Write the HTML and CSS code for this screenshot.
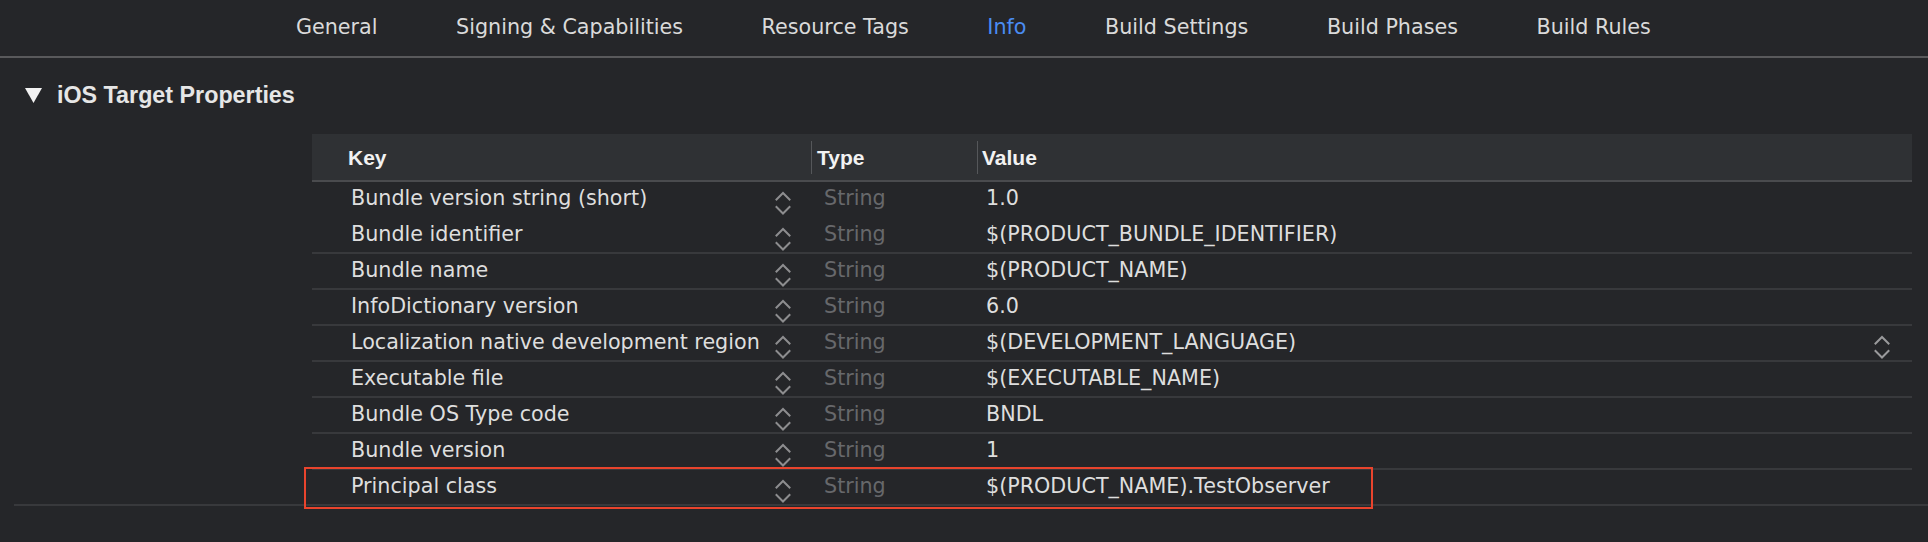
FILE: index.html
```html
<!DOCTYPE html>
<html lang="en">
<head>
<meta charset="utf-8">
<title>Info</title>
<link rel="stylesheet" href="styles.css">
</head>
<body>
<div class="page">
  <nav class="tabbar">
    <span class="tab">General</span>
    <span class="tab">Signing &amp; Capabilities</span>
    <span class="tab">Resource Tags</span>
    <span class="tab active">Info</span>
    <span class="tab">Build Settings</span>
    <span class="tab">Build Phases</span>
    <span class="tab">Build Rules</span>
  </nav>

  <section class="section">
    <div class="section-title">
      <svg class="disclosure" width="17" height="15" viewBox="0 0 17 15"><path d="M0 0 H17 L8.5 15 Z" fill="#f2f2f2"/></svg>
      <span>iOS Target Properties</span>
    </div>

    <div class="table">
      <div class="thead">
        <div class="th th-key">Key</div>
        <div class="th th-type">Type</div>
        <div class="th th-value">Value</div>
      </div>

      <div class="row first">
        <div class="cell key"><span>Bundle version string (short)</span><svg class="stepper" width="16" height="32" viewBox="0 0 16 32"><path d="M1.5 17.5 L8 11 L14.5 17.5 M1.5 25 L8 31.5 L14.5 25"/></svg></div>
        <div class="cell type">String</div>
        <div class="cell value"><span>1.0</span></div>
      </div>
      <div class="row">
        <div class="cell key"><span>Bundle identifier</span><svg class="stepper" width="16" height="32" viewBox="0 0 16 32"><path d="M1.5 17.5 L8 11 L14.5 17.5 M1.5 25 L8 31.5 L14.5 25"/></svg></div>
        <div class="cell type">String</div>
        <div class="cell value"><span>$(PRODUCT_BUNDLE_IDENTIFIER)</span></div>
      </div>
      <div class="row">
        <div class="cell key"><span>Bundle name</span><svg class="stepper" width="16" height="32" viewBox="0 0 16 32"><path d="M1.5 17.5 L8 11 L14.5 17.5 M1.5 25 L8 31.5 L14.5 25"/></svg></div>
        <div class="cell type">String</div>
        <div class="cell value"><span>$(PRODUCT_NAME)</span></div>
      </div>
      <div class="row">
        <div class="cell key"><span>InfoDictionary version</span><svg class="stepper" width="16" height="32" viewBox="0 0 16 32"><path d="M1.5 17.5 L8 11 L14.5 17.5 M1.5 25 L8 31.5 L14.5 25"/></svg></div>
        <div class="cell type">String</div>
        <div class="cell value"><span>6.0</span></div>
      </div>
      <div class="row">
        <div class="cell key"><span>Localization native development region</span><svg class="stepper" width="16" height="32" viewBox="0 0 16 32"><path d="M1.5 17.5 L8 11 L14.5 17.5 M1.5 25 L8 31.5 L14.5 25"/></svg></div>
        <div class="cell type">String</div>
        <div class="cell value"><span>$(DEVELOPMENT_LANGUAGE)</span><svg class="stepper light" width="16" height="32" viewBox="0 0 16 32"><path d="M1.5 17.5 L8 11 L14.5 17.5 M1.5 25 L8 31.5 L14.5 25"/></svg></div>
      </div>
      <div class="row">
        <div class="cell key"><span>Executable file</span><svg class="stepper" width="16" height="32" viewBox="0 0 16 32"><path d="M1.5 17.5 L8 11 L14.5 17.5 M1.5 25 L8 31.5 L14.5 25"/></svg></div>
        <div class="cell type">String</div>
        <div class="cell value"><span>$(EXECUTABLE_NAME)</span></div>
      </div>
      <div class="row">
        <div class="cell key"><span>Bundle OS Type code</span><svg class="stepper" width="16" height="32" viewBox="0 0 16 32"><path d="M1.5 17.5 L8 11 L14.5 17.5 M1.5 25 L8 31.5 L14.5 25"/></svg></div>
        <div class="cell type">String</div>
        <div class="cell value"><span>BNDL</span></div>
      </div>
      <div class="row">
        <div class="cell key"><span>Bundle version</span><svg class="stepper" width="16" height="32" viewBox="0 0 16 32"><path d="M1.5 17.5 L8 11 L14.5 17.5 M1.5 25 L8 31.5 L14.5 25"/></svg></div>
        <div class="cell type">String</div>
        <div class="cell value"><span>1</span></div>
      </div>
      <div class="row last">
        <div class="cell key"><span>Principal class</span><svg class="stepper" width="16" height="32" viewBox="0 0 16 32"><path d="M1.5 17.5 L8 11 L14.5 17.5 M1.5 25 L8 31.5 L14.5 25"/></svg></div>
        <div class="cell type">String</div>
        <div class="cell value"><span>$(PRODUCT_NAME).TestObserver</span></div>
        <div class="highlight"></div>
      </div>
    </div>
  </section>
</div>
</body>
</html>
```

FILE: styles.css
```css
* {
  box-sizing: border-box;
}

html, body {
  margin: 0;
  padding: 0;
  background: #252629;
}

.page {
  width: 1928px;
  height: 542px;
  background: #252629;
  font-family: "DejaVu Sans", sans-serif;
  font-size: 20.7px;
  color: #dedede;
  overflow: hidden;
}

/* Tab bar */
.tabbar {
  display: flex;
  gap: 78.5px;
  height: 58px;
  padding: 15px 0 0 296px;
  border-bottom: 2px solid #59595b;
  line-height: 24px;
}

.tab {
  color: #dadada;
  white-space: nowrap;
}

.tab.active {
  color: #4a8cf2;
}

/* Section */
.section {
  margin-left: 14px;
  padding-top: 24px;
  border-bottom: 2px solid #38393c;
}

.section-title {
  display: flex;
  align-items: center;
  gap: 15px;
  height: 26px;
  padding-left: 11px;
  font-family: "Liberation Sans", Arial, sans-serif;
  font-weight: bold;
  font-size: 23.3px;
  line-height: 26px;
  color: #e6e6e6;
}

.disclosure {
  display: block;
  flex: none;
}

/* Table */
.table {
  margin: 26px 16px 0 298px;
}

.thead {
  display: grid;
  grid-template-columns: 499px 166px 1fr;
  align-items: center;
  height: 48px;
  background: #2f3134;
  border-bottom: 2px solid #4a4b4e;
  font-family: "Liberation Sans", Arial, sans-serif;
  font-weight: bold;
  font-size: 21px;
  color: #f2f2f2;
}

.th {
  height: 33px;
  line-height: 33px;
}

.th-key {
  padding-left: 36px;
}

.th-type {
  border-left: 1px solid #55575a;
  padding-left: 5px;
}

.th-value {
  border-left: 1px solid #55575a;
  padding-left: 4px;
}

.row {
  position: relative;
  display: grid;
  grid-template-columns: 499px 166px 1fr;
  height: 36px;
  padding-bottom: 2px;
  border-bottom: 2px solid #38393c;
  line-height: 32px;
}

.row.first {
  border-bottom-color: transparent;
}

.row.last {
  height: 34px;
  border-bottom: none;
}

.cell {
  display: flex;
  align-items: flex-start;
  white-space: nowrap;
}

.cell.key {
  justify-content: space-between;
  padding-left: 39px;
  padding-right: 20px;
  color: #dedede;
}

.cell.type {
  padding-left: 13px;
  color: #67686b;
}

.cell.value {
  justify-content: space-between;
  padding-left: 9px;
  padding-right: 22px;
  color: #dedede;
}

.stepper {
  display: block;
  flex: none;
  overflow: visible;
}

.stepper path {
  fill: none;
  stroke: #8d8d8f;
  stroke-width: 2;
  stroke-linecap: square;
  stroke-linejoin: miter;
}

.stepper.light path {
  stroke: #9a9a9c;
}

/* Annotation box over the last row */
.highlight {
  position: absolute;
  left: -8px;
  top: -3px;
  width: 1069px;
  height: 42px;
  border: 2px solid #e9442d;
  pointer-events: none;
}
```
